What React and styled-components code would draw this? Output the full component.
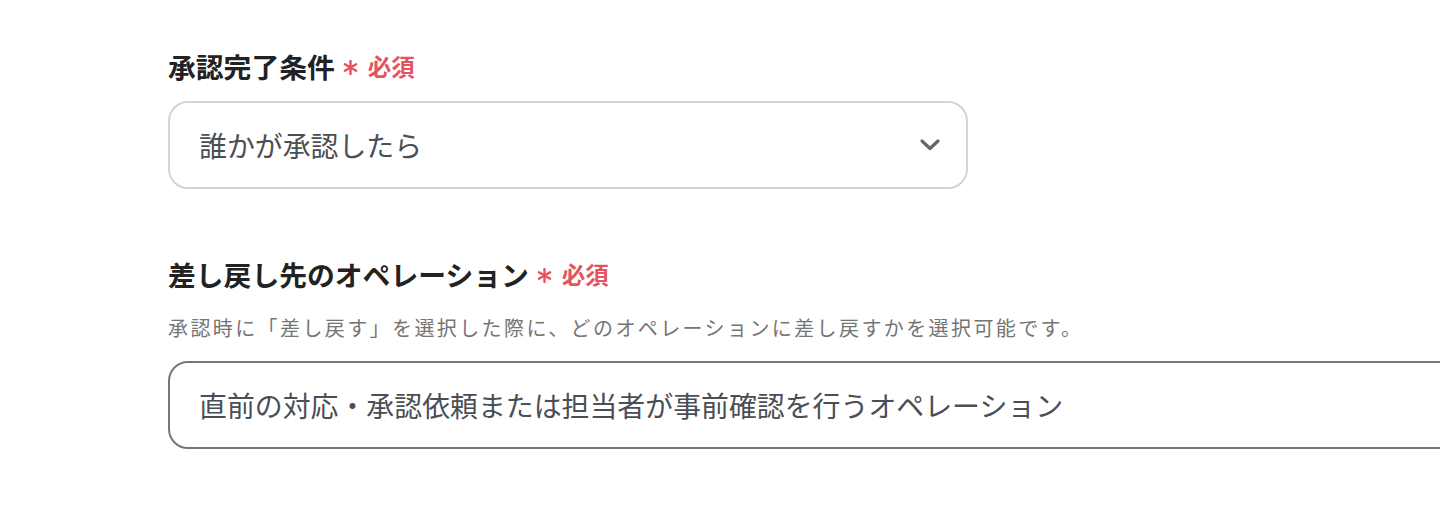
import React from "react";
import styled, { createGlobalStyle } from "styled-components";

const GlobalStyle = createGlobalStyle`
  body {
    margin: 0;
    background: #ffffff;
    overflow: hidden;
    font-family: "Noto Sans CJK JP", "Noto Sans", sans-serif;
  }
`;

const Page = styled.div`
  padding: 45px 0 0 168px;
  display: flex;
  flex-direction: column;
  gap: 64px;
`;

const Field = styled.div`
  display: flex;
  flex-direction: column;
`;

const Label = styled.div`
  display: flex;
  align-items: center;
  height: 42px;
  font-size: 27.8px;
  font-weight: 700;
  color: #222222;
  white-space: nowrap;
`;

const Required = styled.span`
  display: inline-flex;
  align-items: center;
  gap: 10px;
  margin-left: 8px;
  font-size: 23.5px;
  font-weight: 700;
  color: #e5535e;

  svg {
    position: relative;
    top: 1px;
  }
`;

const Help = styled.div`
  margin-top: 18px;
  font-size: 20px;
  line-height: 30px;
  letter-spacing: 2.4px;
  color: #757575;
  white-space: nowrap;
`;

const Box = styled.div`
  box-sizing: border-box;
  margin-top: ${(p) => p.$top}px;
  width: ${(p) => p.$width}px;
  height: 88px;
  display: flex;
  align-items: center;
  justify-content: space-between;
  padding: 0 24px 0 29px;
  border: 2px solid ${(p) => p.$border};
  border-radius: 20px;
  font-size: 27.9px;
  color: #4a4e55;
  white-space: nowrap;
`;

const Chevron = () => (
  <svg width="24" height="24" viewBox="0 0 24 24" fill="none">
    <path
      d="M4 8l8 7.5L20 8"
      stroke="#666666"
      strokeWidth="3.2"
      strokeLinecap="round"
      strokeLinejoin="round"
    />
  </svg>
);

const AsteriskIcon = () => (
  <svg width="15" height="15" viewBox="0 0 15 15" fill="none">
    <g stroke="#e5535e" strokeWidth="2.4" strokeLinecap="round">
      <path d="M7.5 1v13" />
      <path d="M1.9 4.25l11.2 6.5" />
      <path d="M1.9 10.75l11.2-6.5" />
    </g>
  </svg>
);

const RequiredMark = () => (
  <Required>
    <AsteriskIcon />
    必須
  </Required>
);

export default function App() {
  return (
    <>
      <GlobalStyle />
      <Page>
        <Field>
          <Label>
            承認完了条件
            <RequiredMark />
          </Label>
          <Box $top={14} $width={800} $border="#d0d4d9">
            誰かが承認したら
            <Chevron />
          </Box>
        </Field>
        <Field>
          <Label>
            差し戻し先のオペレーション
            <RequiredMark />
          </Label>
          <Help>
            承認時に「差し戻す」を選択した際に、どのオペレーションに差し戻すかを選択可能です。
          </Help>
          <Box $top={18} $width={1400} $border="#767676">
            直前の対応・承認依頼または担当者が事前確認を行うオペレーション
          </Box>
        </Field>
      </Page>
    </>
  );
}
